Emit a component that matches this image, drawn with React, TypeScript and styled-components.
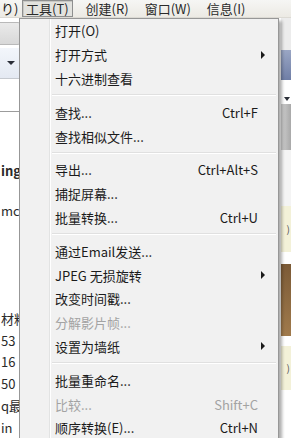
import styled, { createGlobalStyle } from "styled-components";

type MenuEntry =
  | { kind: "sep" }
  | {
      kind: "item";
      label: string;
      shortcut?: string;
      submenu?: boolean;
      disabled?: boolean;
    };

const menuEntries: MenuEntry[] = [
  { kind: "item", label: "打开(O)" },
  { kind: "item", label: "打开方式", submenu: true },
  { kind: "item", label: "十六进制查看" },
  { kind: "sep" },
  { kind: "item", label: "查找...", shortcut: "Ctrl+F" },
  { kind: "item", label: "查找相似文件..." },
  { kind: "sep" },
  { kind: "item", label: "导出...", shortcut: "Ctrl+Alt+S" },
  { kind: "item", label: "捕捉屏幕..." },
  { kind: "item", label: "批量转换...", shortcut: "Ctrl+U" },
  { kind: "sep" },
  { kind: "item", label: "通过Email发送..." },
  { kind: "item", label: "JPEG 无损旋转", submenu: true },
  { kind: "item", label: "改变时间戳..." },
  { kind: "item", label: "分解影片帧...", disabled: true },
  { kind: "item", label: "设置为墙纸", submenu: true },
  { kind: "sep" },
  { kind: "item", label: "批量重命名..." },
  { kind: "item", label: "比较...", shortcut: "Shift+C", disabled: true },
  { kind: "item", label: "顺序转换(E)...", shortcut: "Ctrl+N" },
];

const topMenus = [
  { label: "工具(T)", open: true },
  { label: "创建(R)" },
  { label: "窗口(W)" },
  { label: "信息(I)" },
];

// rows of the file list peeking out left of the menu
const leftRows = [
  { h: 48, text: "" },
  { h: 22, text: "ing", bold: true },
  { h: 19, text: "" },
  { h: 22, text: "mc" },
  { h: 87, text: "" },
  { h: 22, text: "材料" },
  { h: 22, text: "53" },
  { h: 22, text: "16" },
  { h: 22, text: "50" },
  { h: 22, text: "q最" },
  { h: 22, text: "in" },
];

const GlobalStyle = createGlobalStyle`
  html, body {
    margin: 0;
    padding: 0;
    background: #ffffff;
  }
  body {
    font-family: "Noto Sans CJK SC", "Noto Sans", sans-serif;
    font-size: 13px;
    color: #1b1b1b;
  }
`;

const Screen = styled.div`
  position: relative;
  width: 291px;
  height: 438px;
  overflow: hidden;
  background: #ffffff;
  display: flex;
  flex-direction: column;
`;

const MenuBar = styled.div`
  height: 18px;
  flex: none;
  display: flex;
  align-items: stretch;
  background: linear-gradient(#f6f6f4, #eceae4);
  border-bottom: 1px solid #dcdad4;
  box-sizing: border-box;
`;

const Cut = styled.span`
  display: flex;
  align-items: center;
  width: 22px;
  padding-left: 1px;
  box-sizing: border-box;
  line-height: 1;
`;

const TopItem = styled.div<{ $open?: boolean }>`
  display: flex;
  align-items: center;
  padding: 0 3px;
  margin-right: ${({ $open }) => ($open ? "9px" : "8px")};
  line-height: 1;
  border: 1px solid ${({ $open }) => ($open ? "#8e8f8f" : "transparent")};
  background: ${({ $open }) => ($open ? "#e2e2de" : "transparent")};
  box-shadow: ${({ $open }) => ($open ? "inset 1px 1px 0 #c8c8c4" : "none")};
  color: #2a2a2a;
`;

const Workspace = styled.div`
  flex: 1;
  display: flex;
  min-height: 0;
`;

const LeftStrip = styled.div`
  width: 40px;
  display: flex;
  flex-direction: column;
  flex: none;
`;

const TabStub = styled.div`
  height: 23px;
  margin: 4px 0 3px -6px;
  width: 28px;
  border: 1px solid #b9b9b9;
  border-radius: 4px;
  background: linear-gradient(#eaeaea, #d8d8d8);
  box-sizing: border-box;
`;

const ToolStrip = styled.div`
  height: 32px;
  display: flex;
  align-items: center;
  padding-left: 7px;
  background: linear-gradient(#f3f6fb, #e4e9f2);
  border-bottom: 1px solid #c5c9cf;
  box-sizing: border-box;
`;

const DropArrow = styled.span`
  width: 0;
  height: 0;
  border-left: 4px solid transparent;
  border-right: 4px solid transparent;
  border-top: 4px solid #2b2f38;
`;

const BlankBand = styled.div`
  height: 32px;
  border-bottom: 1px solid #9c9c9c;
`;

const FileRow = styled.div<{ $h: number; $bold?: boolean }>`
  height: ${({ $h }) => $h}px;
  display: flex;
  align-items: center;
  padding-left: 1px;
  white-space: nowrap;
  font-weight: ${({ $bold }) => ($bold ? 700 : 400)};
  color: #2a2a2a;
`;

const Middle = styled.div`
  flex: 1;
`;

const RightStrip = styled.div`
  width: 10px;
  flex: none;
  display: flex;
  flex-direction: column;
`;

const Band = styled.div<{ $h: number; $bg: string }>`
  height: ${({ $h }) => $h}px;
  flex: none;
  background: ${({ $bg }) => $bg};
  display: flex;
  align-items: center;
  justify-content: flex-end;
  padding-right: 1px;
  font-size: 10px;
  line-height: 1;
  color: #555;
  overflow: hidden;
`;

const RightArrow = styled.span`
  width: 0;
  height: 0;
  border-left: 3px solid transparent;
  border-right: 3px solid transparent;
  border-top: 4px solid #2b2f38;
`;

const Menu = styled.div`
  position: absolute;
  left: 19px;
  top: 18px;
  width: 260px;
  box-sizing: border-box;
  padding: 0 2px 6px 2px;
  border: 1px solid #979797;
  background:
    linear-gradient(
      to right,
      transparent 29px,
      #e2e3e3 29px,
      #e2e3e3 30px,
      #ffffff 30px,
      #ffffff 31px,
      transparent 31px
    ),
    #f1f1f1;
  box-shadow: 3px 3px 3px rgba(0, 0, 0, 0.32);
`;

const Item = styled.div<{ $disabled?: boolean }>`
  height: 23.8px;
  display: grid;
  grid-template-columns: 1fr auto 18px;
  align-items: center;
  padding-left: 33px;
  color: ${({ $disabled }) => ($disabled ? "#a3a3a3" : "#1b1b1b")};
  white-space: nowrap;
`;

const Shortcut = styled.span`
  text-align: right;
`;

const ArrowCell = styled.span`
  display: flex;
  padding-left: 3px;
`;

const SubArrow = styled.span`
  width: 0;
  height: 0;
  border-top: 4px solid transparent;
  border-bottom: 4px solid transparent;
  border-left: 4px solid #1b1b1b;
`;

const Separator = styled.div`
  height: 10px;
  display: flex;
  align-items: center;
  margin-left: 30px;

  &::before {
    content: "";
    flex: 1;
    height: 1px;
    background: #e0e0e0;
    border-bottom: 1px solid #ffffff;
  }
`;

export default function App() {
  return (
    <Screen>
      <GlobalStyle />
      <MenuBar>
        <Cut>り)</Cut>
        {topMenus.map((m) => (
          <TopItem key={m.label} $open={m.open}>
            {m.label}
          </TopItem>
        ))}
      </MenuBar>

      <Workspace>
        <LeftStrip>
          <TabStub />
          <ToolStrip>
            <DropArrow />
          </ToolStrip>
          <BlankBand />
          {leftRows.map((r, i) => (
            <FileRow key={i} $h={r.h} $bold={r.bold}>
              {r.text}
            </FileRow>
          ))}
        </LeftStrip>
        <Middle />
        <RightStrip>
          <Band $h={32} $bg="#ececec" />
          <Band $h={30} $bg="linear-gradient(#9aa6c4, #6f7ea6)" />
          <Band $h={14} $bg="#ffffff" />
          <Band $h={10} $bg="#ffffff">
            <RightArrow />
          </Band>
          <Band $h={46} $bg="linear-gradient(to right, #d0d0d0, #a9a9a9)" />
          <Band $h={56} $bg="#f4f4f4" />
          <Band $h={46} $bg="#f3f1d8">)</Band>
          <Band $h={12} $bg="#ffffff" />
          <Band $h={72} $bg="linear-gradient(#7b5a36, #a07a4c)" />
          <Band $h={10} $bg="#ffffff" />
          <Band $h={44} $bg="#f3f1d8">)</Band>
          <Band $h={60} $bg="#ffffff" />
        </RightStrip>
      </Workspace>

      <Menu>
        {menuEntries.map((e, i) =>
          e.kind === "sep" ? (
            <Separator key={i} />
          ) : (
            <Item key={i} $disabled={e.disabled}>
              <span>{e.label}</span>
              <Shortcut>{e.shortcut ?? ""}</Shortcut>
              <ArrowCell>{e.submenu ? <SubArrow /> : null}</ArrowCell>
            </Item>
          )
        )}
      </Menu>
    </Screen>
  );
}
